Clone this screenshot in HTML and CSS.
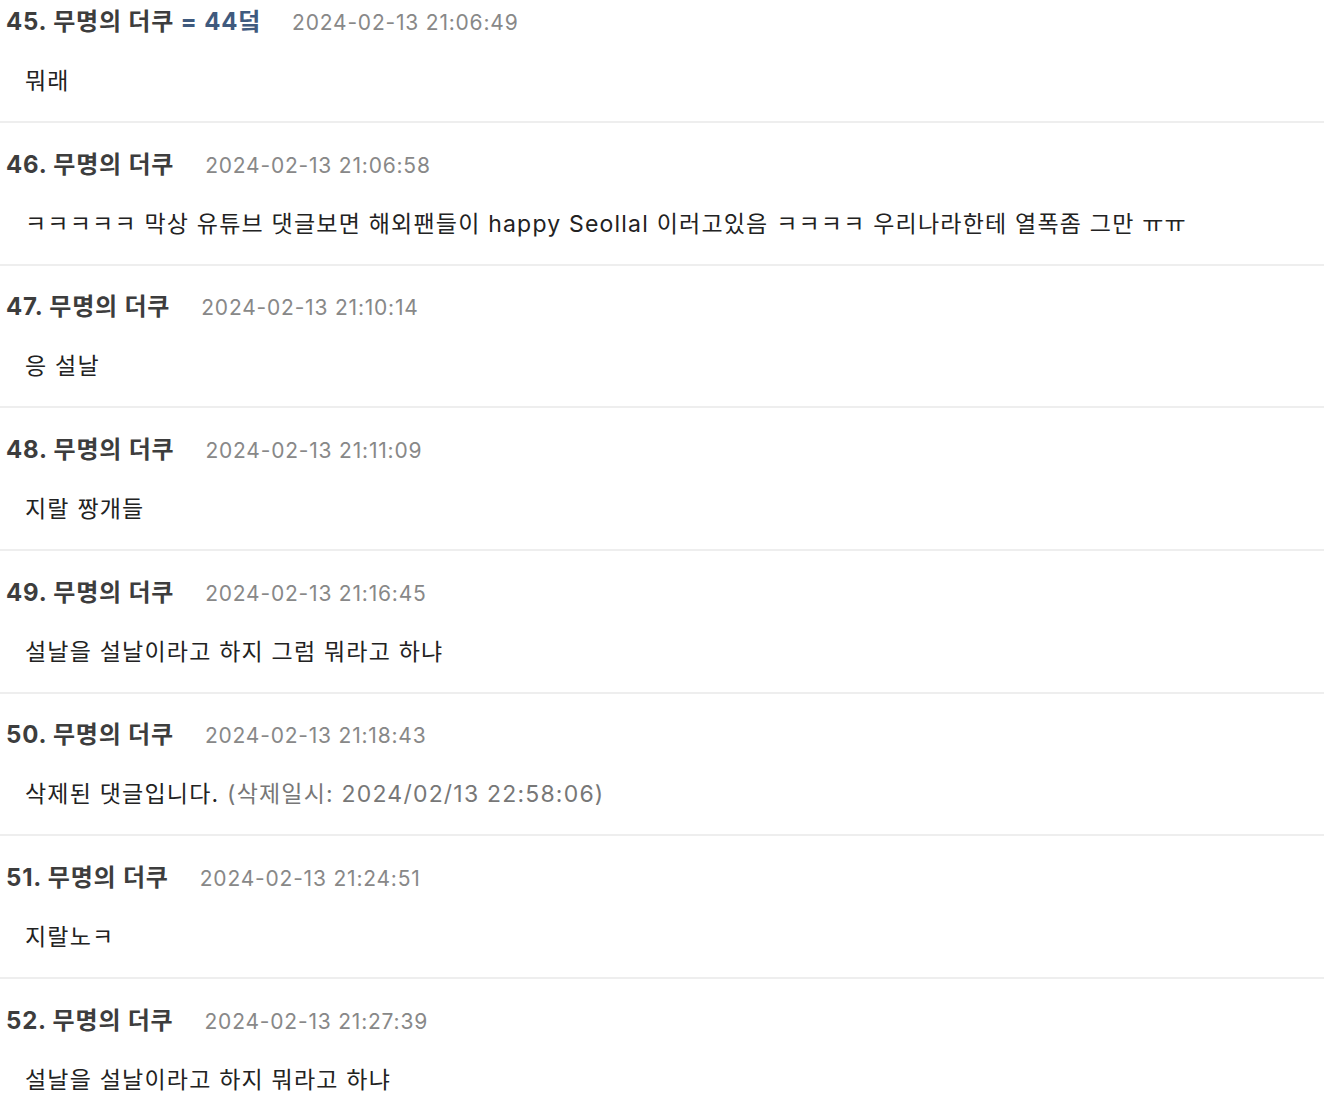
FILE: index.html
```html
<!DOCTYPE html>
<html lang="ko">
<head>
<meta charset="utf-8">
<link rel="stylesheet" href="styles.css">
</head>
<body>
<ul class="comments">
  <li class="comment">
    <div class="head"><span class="name">45. 무명의 더쿠 <span class="ref">= 44덬</span></span><span class="date">2024-02-13 21:06:49</span></div>
    <div class="text">뭐래</div>
  </li>
  <li class="comment">
    <div class="head"><span class="name">46. 무명의 더쿠</span><span class="date">2024-02-13 21:06:58</span></div>
    <div class="text">ㅋㅋㅋㅋㅋ 막상 유튜브 댓글보면 해외팬들이 happy Seollal 이러고있음 ㅋㅋㅋㅋ 우리나라한테 열폭좀 그만 ㅠㅠ</div>
  </li>
  <li class="comment">
    <div class="head"><span class="name">47. 무명의 더쿠</span><span class="date">2024-02-13 21:10:14</span></div>
    <div class="text">응 설날</div>
  </li>
  <li class="comment">
    <div class="head"><span class="name">48. 무명의 더쿠</span><span class="date">2024-02-13 21:11:09</span></div>
    <div class="text">지랄 짱개들</div>
  </li>
  <li class="comment">
    <div class="head"><span class="name">49. 무명의 더쿠</span><span class="date">2024-02-13 21:16:45</span></div>
    <div class="text">설날을 설날이라고 하지 그럼 뭐라고 하냐</div>
  </li>
  <li class="comment">
    <div class="head"><span class="name">50. 무명의 더쿠</span><span class="date">2024-02-13 21:18:43</span></div>
    <div class="text">삭제된 댓글입니다. <span class="deleted">(삭제일시: 2024/02/13 22:58:06)</span></div>
  </li>
  <li class="comment">
    <div class="head"><span class="name">51. 무명의 더쿠</span><span class="date">2024-02-13 21:24:51</span></div>
    <div class="text">지랄노ㅋ</div>
  </li>
  <li class="comment">
    <div class="head"><span class="name">52. 무명의 더쿠</span><span class="date">2024-02-13 21:27:39</span></div>
    <div class="text">설날을 설날이라고 하지 뭐라고 하냐</div>
  </li>
</ul>
</body>
</html>
```

FILE: styles.css
```css
html, body {
  margin: 0;
  padding: 0;
  background: #fff;
}
body {
  font-family: Inter, "Noto Sans CJK KR", sans-serif;
  color: #333;
}
.comments {
  list-style: none;
  margin: 0;
  padding: 0;
}
.comment {
  padding: 25.67px 0 22px 6px;
  border-bottom: 2px solid #eeeeee;
}
.comment:first-child {
  padding-top: 6px;
}
.head {
  display: flex;
  align-items: baseline;
  line-height: 32px;
  height: 32px;
}
.name {
  font-size: 24px;
  font-weight: 700;
  letter-spacing: 0.8px;
  color: #3d3d3d;
}
.ref {
  color: #3f5a7e;
}
.date {
  margin-left: 31px;
  font-size: 21px;
  letter-spacing: 0.8px;
  color: #888;
}
.text {
  margin-top: 25px;
  padding-left: 19px;
  font-size: 23px;
  letter-spacing: 1.2px;
  line-height: 36px;
  height: 36px;
  color: #222;
  white-space: nowrap;
}
.deleted {
  color: #777;
}
```
